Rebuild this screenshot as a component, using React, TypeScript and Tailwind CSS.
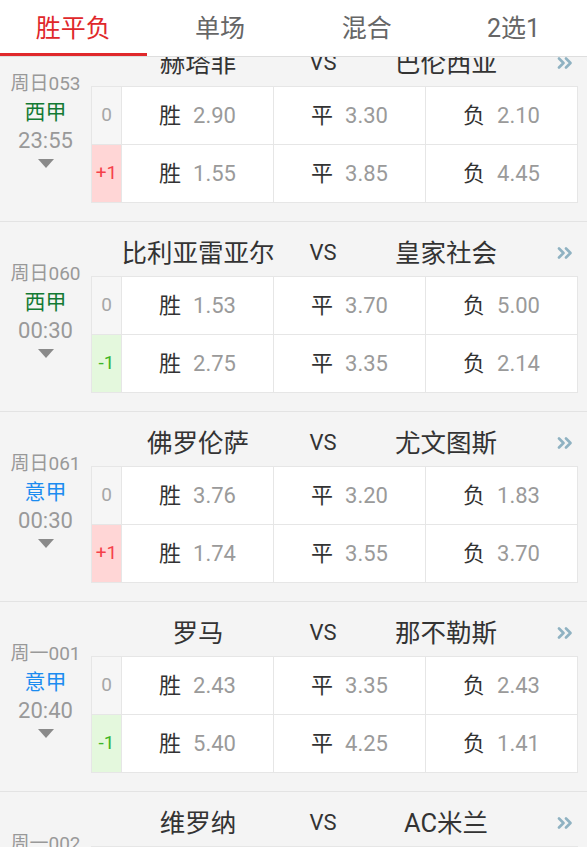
import React from 'react';

interface Match {
  id: string;
  no: string;
  league: string;
  leagueColor: string;
  time: string;
  home: string;
  away: string;
  odds: string[];
  handicap: string;
  hOdds: string[];
}

const matches: Match[] = [
  { id: '1', no: '周日053', league: '西甲', leagueColor: 'text-[#137a34]', time: '23:55', home: '赫塔菲', away: '巴伦西亚', odds: ['2.90', '3.30', '2.10'], handicap: '+1', hOdds: ['1.55', '3.85', '4.45'] },
  { id: '2', no: '周日060', league: '西甲', leagueColor: 'text-[#137a34]', time: '00:30', home: '比利亚雷亚尔', away: '皇家社会', odds: ['1.53', '3.70', '5.00'], handicap: '-1', hOdds: ['2.75', '3.35', '2.14'] },
  { id: '3', no: '周日061', league: '意甲', leagueColor: 'text-[#1c8cf0]', time: '00:30', home: '佛罗伦萨', away: '尤文图斯', odds: ['3.76', '3.20', '1.83'], handicap: '+1', hOdds: ['1.74', '3.55', '3.70'] },
  { id: '4', no: '周一001', league: '意甲', leagueColor: 'text-[#1c8cf0]', time: '20:40', home: '罗马', away: '那不勒斯', odds: ['2.43', '3.35', '2.43'], handicap: '-1', hOdds: ['5.40', '4.25', '1.41'] },
  { id: '5', no: '周一002', league: '意甲', leagueColor: 'text-[#1c8cf0]', time: '03:45', home: '维罗纳', away: 'AC米兰', odds: ['6.10', '4.05', '1.42'], handicap: '+1', hOdds: ['2.60', '3.40', '2.30'] },
];

const tabs = ['胜平负', '单场', '混合', '2选1'];
const labels = ['胜', '平', '负'];

const MoreArrow = () => (
  <svg width="16" height="12" viewBox="0 0 16 12" fill="none" stroke="#8fb2c2" strokeWidth="2.6" strokeLinecap="round" strokeLinejoin="round">
    <polyline points="2,1.5 6.5,6 2,10.5" />
    <polyline points="9,1.5 13.5,6 9,10.5" />
  </svg>
);

const OddsCell = ({ label, value }: { label: string; value: string }) => (
  <div className="bg-white flex items-center justify-center gap-[12px]">
    <span className="text-[22px] text-[#333]">{label}</span>
    <span className="text-[22px] text-[#9a9a9a]">{value}</span>
  </div>
);

const MatchCard = ({ m }: { m: Match }) => {
  const plus = m.handicap.startsWith('+');
  return (
    <div className="flex border-t border-[#e3e3e3] pb-[18px]">
      <div className="w-[91px] shrink-0 flex flex-col items-center pt-[38px]">
        <div className="h-[28px] leading-[28px] text-[19px] text-[#999]">{m.no}</div>
        <div className={`h-[29px] leading-[29px] text-[21px] ${m.leagueColor}`}>{m.league}</div>
        <div className="h-[28px] leading-[28px] text-[22px] text-[#999]">{m.time}</div>
        <div className="mt-[4px] w-0 h-0 border-l-[8px] border-r-[8px] border-t-[9px] border-l-transparent border-r-transparent border-t-[#8a8a8a]" />
      </div>
      <div className="flex-1 flex flex-col pr-[9px]">
        <div className="h-[54px] flex items-start pt-[17px] text-[#333]">
          <div className="w-[30px]" />
          <div className="w-[154px] text-center text-[25.5px] leading-[28px] whitespace-nowrap">{m.home}</div>
          <div className="w-[96px] text-center text-[22px] leading-[28px]">VS</div>
          <div className="w-[150px] text-center text-[25.5px] leading-[28px] whitespace-nowrap">{m.away}</div>
          <div className="flex-1 flex justify-end pr-[5px] pt-[8px]">
            <MoreArrow />
          </div>
        </div>
        <div className="grid grid-cols-[29px_1fr_1fr_1fr] grid-rows-[57px_57px] gap-px bg-[#e6e6e6] border border-[#e6e6e6]">
          <div className="bg-[#f6f6f6] flex items-center justify-center text-[19px] text-[#a6a6a6]">0</div>
          {m.odds.map((o, i) => (
            <OddsCell key={i} label={labels[i]} value={o} />
          ))}
          <div
            className={`flex items-center justify-center text-[19px] ${
              plus ? 'bg-[#ffd6d6] text-[#f5414a]' : 'bg-[#e4f8dd] text-[#3cb527]'
            }`}
          >
            {m.handicap}
          </div>
          {m.hOdds.map((o, i) => (
            <OddsCell key={i} label={labels[i]} value={o} />
          ))}
        </div>
      </div>
    </div>
  );
};

const App: React.FC = () => {
  return (
    <div
      className="h-screen flex flex-col bg-[#f4f4f4] overflow-hidden"
      style={{ fontFamily: 'Roboto, "Noto Sans CJK SC", sans-serif' }}
    >
      <div className="flex h-[57px] shrink-0 bg-white border-b border-[#dedede]">
        {tabs.map((t, i) => (
          <div key={t} className="flex-1 flex flex-col">
            <div className={`flex-1 flex items-center justify-center pt-[4px] text-[25px] ${i === 0 ? 'text-[#e0282b]' : 'text-[#666]'}`}>
              {t}
            </div>
            <div className={`h-[3px] ${i === 0 ? 'bg-[#e0282b]' : ''}`} />
          </div>
        ))}
      </div>
      <div className="flex-1 overflow-hidden">
        <div className="-mt-[26px]">
          {matches.map((m) => (
            <MatchCard key={m.id} m={m} />
          ))}
        </div>
      </div>
    </div>
  );
};

export default App;
